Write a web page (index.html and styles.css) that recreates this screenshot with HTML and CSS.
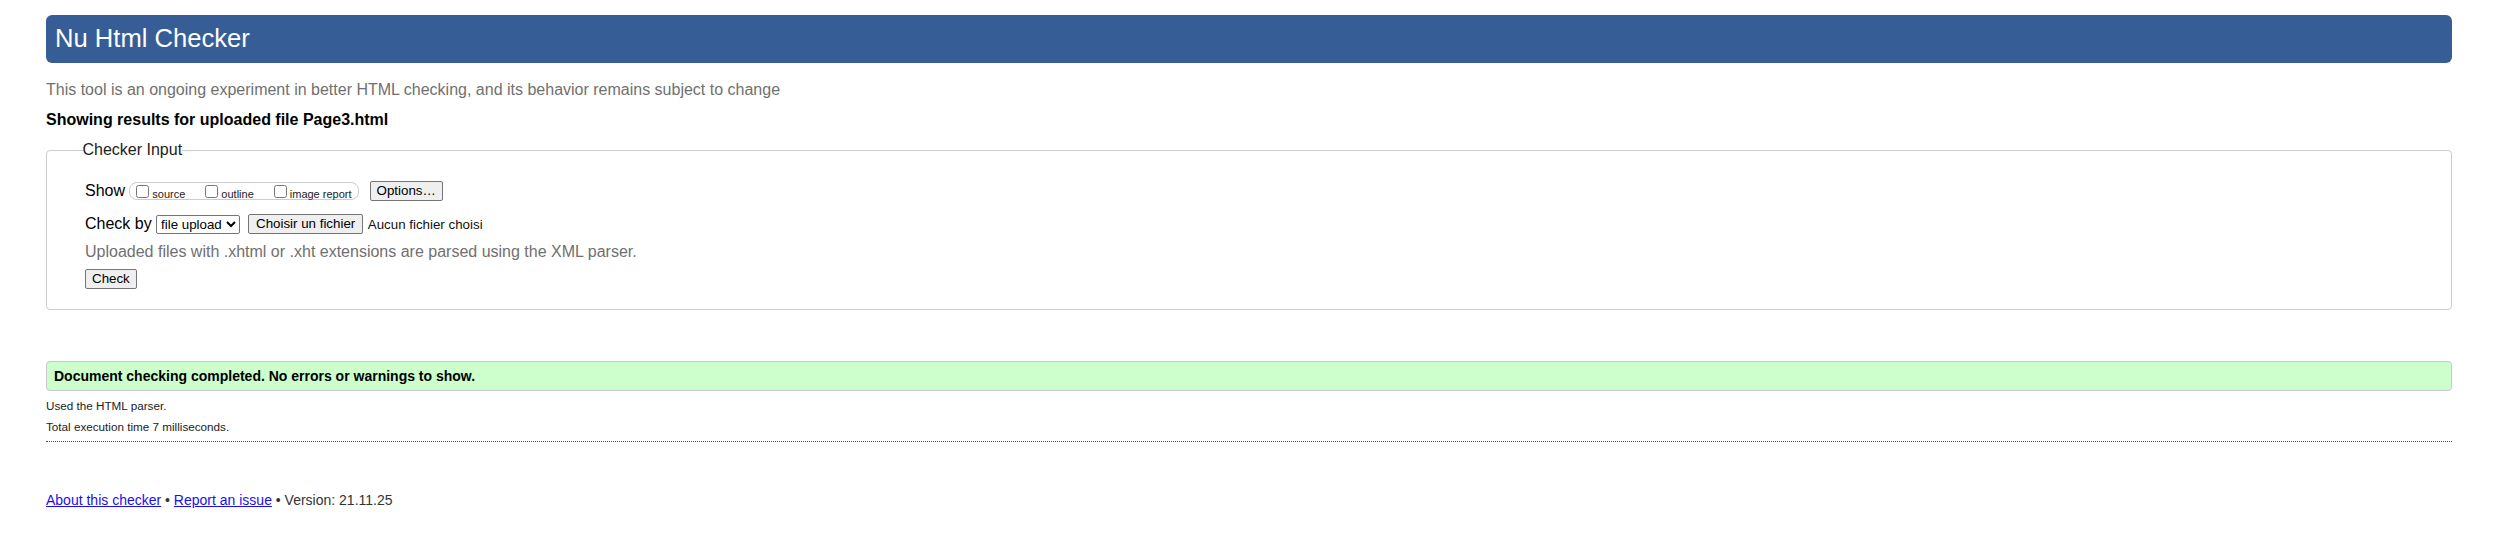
FILE: index.html
```html
<!DOCTYPE html>
<html lang="en">
<head>
<meta charset="utf-8">
<title>Nu Html Checker</title>
<link rel="stylesheet" href="styles.css">
</head>
<body>
<h1 class="title">Nu Html Checker</h1>
<p class="tagline">This tool is an ongoing experiment in better HTML checking, and its behavior remains subject to change</p>
<p class="showing">Showing results for uploaded file Page3.html</p>
<form class="checker">
  <fieldset class="input-box">
    <legend class="input-legend">Checker Input</legend>
    <div class="row row-show">
      <span class="row-label">Show</span>
      <span class="show-group">
        <label class="opt"><input type="checkbox" class="cb">source</label>
        <label class="opt"><input type="checkbox" class="cb">outline</label>
        <label class="opt"><input type="checkbox" class="cb">image report</label>
      </span>
      <button type="button" class="btn btn-options">Options…</button>
    </div>
    <div class="row row-by">
      <span class="row-label">Check by</span>
      <select class="sel"><option>file upload</option></select>
      <button type="button" class="btn btn-file">Choisir un fichier</button>
      <span class="file-status">Aucun fichier choisi</span>
    </div>
    <p class="hint">Uploaded files with .xhtml or .xht extensions are parsed using the XML parser.</p>
    <button type="submit" class="btn btn-check">Check</button>
  </fieldset>
</form>
<p class="success">Document checking completed. No errors or warnings to show.</p>
<div class="details">
  <p class="meta">Used the HTML parser.</p>
  <p class="meta">Total execution time 7 milliseconds.</p>
</div>
<hr class="rule">
<p class="footer"><a href="#">About this checker</a> • <a href="#">Report an issue</a> • Version: 21.11.25</p>
</body>
</html>
```
FILE: styles.css
```css
html {
  background: #fff;
}

body {
  margin: 0;
  padding: 15px 41px 0 46px;
  font-family: "Liberation Sans", Arial, sans-serif;
  color: #000;
}

.title {
  margin: 0;
  padding: 8px 9px 10px;
  background: #365d95;
  color: #fff;
  font-weight: normal;
  font-size: 25.6px;
  line-height: 30px;
  border-radius: 6px;
}

.tagline {
  margin: 16.5px 0 0;
  font-size: 16px;
  line-height: 20px;
  color: #707070;
}

.showing {
  margin: 10px 0 0;
  font-size: 16px;
  line-height: 20px;
  font-weight: bold;
}

.checker {
  margin: 0;
}

.input-box {
  margin: 11px 0 0;
  padding: 0 38px 20px;
  border: 1px solid #ccc;
  border-radius: 4px;
  min-width: 0;
}

.input-legend {
  margin-left: -2.5px;
  padding: 0 0 2px;
  font-size: 16px;
  line-height: 18px;
  color: #222;
}

.row {
  display: flex;
  align-items: center;
  font-size: 16px;
}

.row-show {
  margin-top: 20px;
}

.row-by {
  margin-top: 13.5px;
}

.row-label {
  margin-right: 4.3px;
  line-height: 18px;
}

.show-group {
  display: inline-flex;
  align-items: baseline;
  gap: 20px;
  box-sizing: border-box;
  height: 18px;
  padding: 2px 6px 0;
  border: 1px solid #ccc;
  border-radius: 8px;
  font-size: 11px;
  line-height: 14px;
}

.opt {
  display: inline-flex;
  align-items: baseline;
  color: #222;
}

.cb {
  width: 13px;
  height: 13px;
  margin: 0 3px 0 0;
}

.btn {
  box-sizing: border-box;
  height: 20px;
  padding: 0 6px;
  border: 1px solid #767676;
  border-radius: 2px;
  background: #efefef;
  color: #000;
  font-family: "Liberation Sans", Arial, sans-serif;
  font-size: 13.33px;
  line-height: 18px;
}

.btn-options {
  margin-left: 11px;
}

.sel {
  box-sizing: border-box;
  width: 84px;
  height: 19px;
  font-family: "Liberation Sans", Arial, sans-serif;
  font-size: 13.33px;
  color: #000;
  border: 1px solid #767676;
  border-radius: 2px;
  background: #fff;
}

.btn-file {
  margin-left: 8px;
  padding: 0 7px;
}

.file-status {
  margin-left: 4.5px;
  font-size: 13.33px;
  color: #111;
}

.hint {
  margin: 8.5px 0 0;
  font-size: 16px;
  line-height: 18px;
  color: #707070;
}

.btn-check {
  display: block;
  margin-top: 8.5px;
}

.success {
  margin: 51px 0 0;
  padding: 6px 7px 5px;
  background: #ccffcc;
  border: 1px solid #c8c8c8;
  border-radius: 4px;
  font-weight: bold;
  font-size: 14px;
  line-height: 17px;
}

.details {
  margin-top: 4px;
}

.meta {
  margin: 0;
  font-size: 11.7px;
  line-height: 21px;
  color: #222;
}

.rule {
  height: 0;
  margin: 4px 0 0;
  border: 0;
  border-top: 1px dotted #555;
}

.footer {
  margin: 49.5px 0 0;
  font-size: 14px;
  line-height: 16px;
  color: #333;
}

.footer a {
  color: #1a0dee;
}
```
